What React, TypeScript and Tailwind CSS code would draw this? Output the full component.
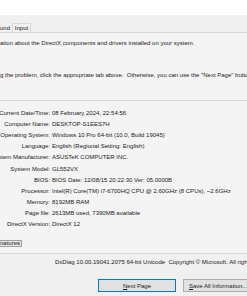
const rows: [string, string][] = [
  ['Current Date/Time:', '08 February 2024, 22:54:56'],
  ['Computer Name:', 'DESKTOP-S1EES7H'],
  ['Operating System:', 'Windows 10 Pro 64-bit (10.0, Build 19045)'],
  ['Language:', 'English (Regional Setting: English)'],
  ['System Manufacturer:', 'ASUSTeK COMPUTER INC.'],
  ['System Model:', 'GL552VX'],
  ['BIOS:', 'BIOS Date: 12/08/15 20:22:30 Ver: 05.0000B'],
  ['Processor:', 'Intel(R) Core(TM) i7-6700HQ CPU @ 2.60GHz (8 CPUs), ~2.6GHz'],
  ['Memory:', '8192MB RAM'],
  ['Page file:', '2613MB used, 7390MB available'],
  ['DirectX Version:', 'DirectX 12'],
];

export default function App() {
  return (
    <div className="h-[296px] w-[247px] overflow-hidden bg-[#f0f0f0] font-['Liberation_Sans',Arial,sans-serif] text-[6px] leading-[6px] text-[#1a1a1a]">
      {/* Title bar */}
      <div className="h-[15px] bg-white" />

      {/* Tabs */}
      <div className="flex h-[17px] items-end">
        <div className="flex h-[9px] items-center border-r border-[#d9d9d9] bg-[#f0f0f0] pr-[2px] whitespace-nowrap">und</div>
        <div className="flex h-[9px] w-[18px] items-center justify-center border-r border-t border-[#d9d9d9] bg-[#f0f0f0]">Input</div>
      </div>

      {/* Tab page */}
      <div className="flex h-[222px] flex-col overflow-hidden border-y border-[#d9d9d9] bg-[#f4f4f4]">
        <p className="mt-[7px] h-[6px] whitespace-nowrap">ation about the DirectX components and drivers installed on your system.</p>
        <p className="mt-[26px] h-[6px] whitespace-nowrap">
          g the problem, click the appropriate tab above.&nbsp; Otherwise, you can use the "Next Page" button below to visit each page in sequence.
        </p>

        {/* System Information group */}
        <div className="mt-[22px] h-px shrink-0 bg-[#d5d5d5]" />
        <div className="mt-[6.5px] grid auto-rows-[11.1px] grid-cols-[50px_1fr] gap-x-[2px]">
          {rows.map(([label, value]) => (
            <div key={label} className="contents">
              <div className="flex items-center justify-end whitespace-nowrap">{label}</div>
              <div className="flex items-center whitespace-nowrap">{value}</div>
            </div>
          ))}
        </div>

        <div className="mt-[10px] flex">
          <span className="flex h-[7px] items-center border border-l-0 border-[#a0a0a0] bg-[#e6e6e6] pr-[1px] whitespace-nowrap">natures</span>
        </div>
      </div>

      {/* Footer */}
      <p className="mt-[5px] h-[6px] whitespace-nowrap pl-[55px]">
        DxDiag 10.00.19041.2075 64-bit Unicode&nbsp; Copyright © Microsoft. All rights reserved.
      </p>
      <div className="mt-[14px] flex gap-[7px] pl-[98px]">
        <button className="flex h-[13px] w-[78px] shrink-0 items-center justify-center border border-[#0078d7] bg-[#e1e1e1] text-[6px]">
          <span>
            <u>N</u>ext Page
          </span>
        </button>
        <button className="flex h-[13px] w-[78px] shrink-0 items-center justify-start border border-[#adadad] bg-[#e1e1e1] pl-[5px] text-[6px] whitespace-nowrap">
          <span>
            <u>S</u>ave All Information...
          </span>
        </button>
      </div>
    </div>
  );
}
